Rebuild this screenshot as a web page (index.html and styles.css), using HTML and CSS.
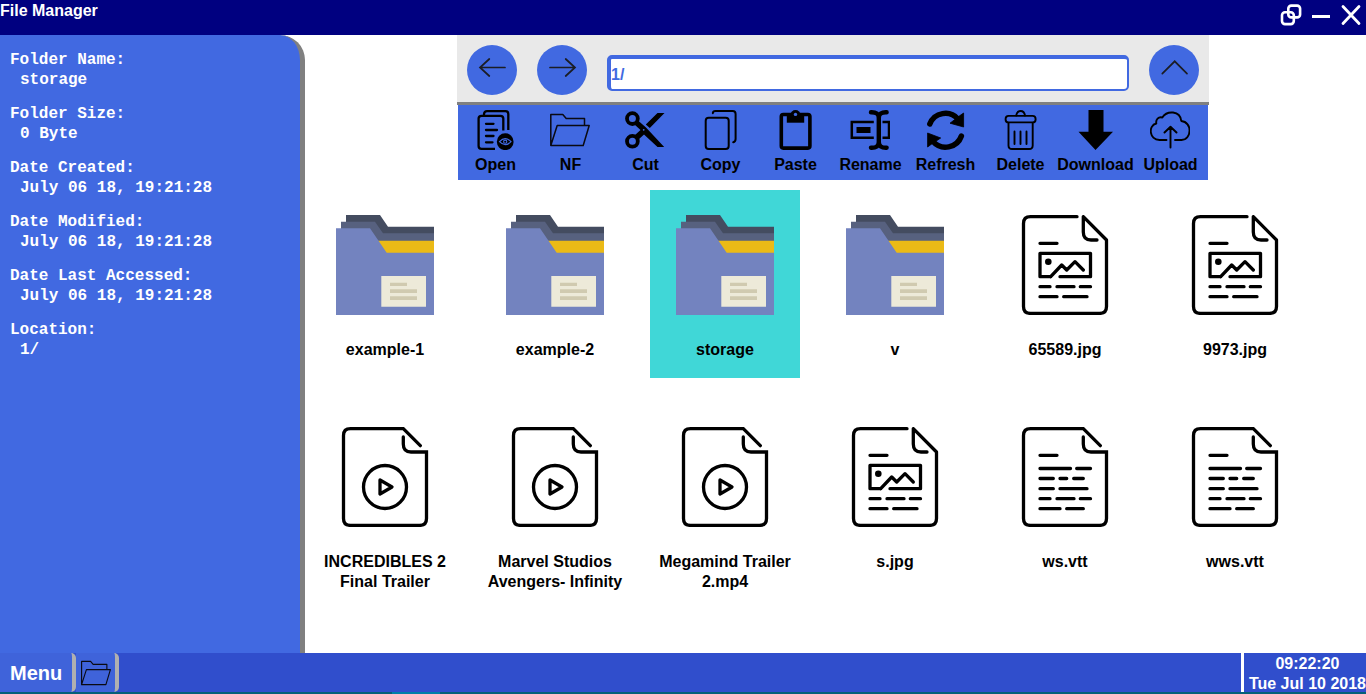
FILE: index.html
```html
<!DOCTYPE html>
<html lang="en">
<head>
<meta charset="utf-8">
<title>File Manager</title>
<link rel="stylesheet" href="styles.css">
</head>
<body class="desktop">
<svg class="sprite" aria-hidden="true">
  <symbol id="i-folder" viewBox="0 0 100 100">
    <path fill="#444c60" d="M11 0H45L53 11.7H99V30H11z"/>
    <path fill="#57617f" d="M6 6.7H40L48 18.3H99V30H6z"/>
    <path fill="#ebba16" d="M42 25.7H99V38H42z"/>
    <path fill="#7383bf" d="M1 13.3H35L51.7 37.7H99V100H1z"/>
    <path fill="#edead9" d="M46.3 61H91V91.7H46.3z"/>
    <path fill="#d0cab0" d="M55 67.7h17v3.3H55zM55 74.3h27v3.7H55zM55 81.3h27V85H55z"/>
  </symbol>
  <symbol id="i-image" viewBox="0 0 100 100">
    <g fill="none" stroke="#000" stroke-width="3.3" stroke-linecap="round" stroke-linejoin="round">
      <path d="M62 1.7H15.5Q8.5 1.7 8.5 8.5V91.5Q8.5 98.4 15.5 98.4H84.5Q91.5 98.4 91.5 91.5V25L68.3 1.7V17Q68.3 25 76 25H82"/>
      <path d="M25 28.3H42M35.7 61.7H25V38.3H75.5V61.7H45M35.7 61.7L46.7 50L51.7 55L60 46.7L68.3 55"/>
      <path d="M25 71.7H35M42 71.7H59M65.3 71.7H75.5M25 81.7H42M48.7 81.7H72"/>
    </g>
    <circle cx="33.3" cy="46.7" r="3.3"/>
  </symbol>
  <symbol id="i-page" viewBox="0 0 100 100">
    <path fill="none" stroke="#000" stroke-width="3.3" stroke-linecap="round" stroke-linejoin="miter" d="M85.3 18.7L68.3 1.7H15.5Q8.5 1.7 8.5 8.5V91.5Q8.5 98.4 15.5 98.4H84.5Q91.5 98.4 91.5 91.5V25H76Q68.3 25 68.3 17V10"/>
  </symbol>
  <symbol id="i-video" viewBox="0 0 100 100">
    <use href="#i-page"/>
    <g fill="none" stroke="#000" stroke-width="3.3" stroke-linejoin="round"><circle cx="50" cy="60" r="21.5"/><path d="M45 53L57 60L45 67z"/></g>
  </symbol>
  <symbol id="i-text" viewBox="0 0 100 100">
    <use href="#i-page"/>
    <path fill="none" stroke="#000" stroke-width="3.3" stroke-linecap="round" d="M25 28.3H42M25 41.5H55.5M61.7 41.5H75.5M25 51.5H38.3M45 51.5H51.7M58.7 51.5H68.3M25 61.7H38.3M45 61.7H72M25 71.7H35M42 71.7H59M65.3 71.7H75.5M25 81.7H45M51.7 81.7H68.3"/>
  </symbol>
  <symbol id="i-open-folder" viewBox="0 0 40 40">
    <path fill="none" stroke="#0a0a12" stroke-width="1.5" stroke-linejoin="round" d="M.8 35.5V4.500H12.800L16.200 8.500H34.500V15M.8 35.500L7.200 15.500H39.200L33.200 35.500z"/>
  </symbol>
</svg>

<header class="titlebar">
  <h1 class="titlebar-name">File Manager</h1>
  <div class="window-controls">
    <button class="window-button" aria-label="Restore"><svg viewBox="0 0 30 30" fill="none" stroke="#fff" stroke-width="2.6"><rect x="12.3" y="5.6" width="11.8" height="11.8" rx="3"/><rect x="6" y="12.3" width="11.8" height="11.8" rx="3"/></svg></button>
    <button class="window-button" aria-label="Minimize"><svg viewBox="0 0 30 30"><path fill="#fff" d="M6 15h18v3H6z"/></svg></button>
    <button class="window-button" aria-label="Close"><svg viewBox="0 0 30 30" stroke="#fff" stroke-width="2.8" stroke-linecap="round"><path d="M7 6.5L23 23.5M23 6.5L7 23.5"/></svg></button>
  </div>
</header>

<div class="workspace">
  <aside class="details">
    <dl class="detail-list">
      <div><dt>Folder Name:</dt><dd>storage</dd></div>
      <div><dt>Folder Size:</dt><dd>0 Byte</dd></div>
      <div><dt>Date Created:</dt><dd>July 06 18, 19:21:28</dd></div>
      <div><dt>Date Modified:</dt><dd>July 06 18, 19:21:28</dd></div>
      <div><dt>Date Last Accessed:</dt><dd>July 06 18, 19:21:28</dd></div>
      <div><dt>Location:</dt><dd>1/</dd></div>
    </dl>
  </aside>

  <main class="browser">
    <nav class="navbar">
      <button class="nav-button" aria-label="Back"><svg viewBox="0 0 50 50"><path d="M38 22.5H13M22.3 14L13 22.5L22.3 31"/></svg></button>
      <button class="nav-button" aria-label="Forward"><svg viewBox="0 0 50 50"><path d="M13 22.5H38M28.7 14L38 22.5L28.7 31"/></svg></button>
      <input class="path" type="text" value="1/" aria-label="Path">
      <button class="nav-button" aria-label="Up"><svg viewBox="0 0 50 50"><path d="M13.3 28.7L25.7 16.3L38 28.7"/></svg></button>
    </nav>

    <div class="tools" role="toolbar" aria-label="File actions">
      <button class="tool"><svg viewBox="0 0 40 40" fill="none" stroke="#000" stroke-width="2.3"><path d="M9 5V4Q9.3 1.2 12 1.2H30.5Q33.3 1.2 33.3 4V20M20 38.8H6.5Q3.6 38.8 3.6 36V8.5Q3.6 5.8 6.5 5.8H25.5Q28.300 5.8 28.300 8.5V20.5"/><path stroke-linecap="round" d="M11 13.8H18.5M11 20H22M11 26H18.5M11 32.3H17.5"/><circle cx="30.2" cy="31.7" r="8.4" fill="#000" stroke="none"/><path stroke="#4169e1" stroke-width="1.2" d="M24.5 31.7Q30.2 25.700 36 31.700Q30.2 37.700 24.500 31.700z"/><circle cx="30.2" cy="31.7" r="1.6" stroke="#4169e1" stroke-width="1.1"/></svg><span>Open</span></button>
      <button class="tool"><svg><use href="#i-open-folder"/></svg><span>NF</span></button>
      <button class="tool"><svg viewBox="0 0 40 40"><g fill="none" stroke="#000" stroke-width="3.8"><circle cx="7.4" cy="8.6" r="5.4"/><circle cx="7.4" cy="31.3" r="5.4"/></g><path d="M9.5 14.5L13 10.5L21 17.5L39.2 37H32.5L19 24.5L13 30L9.5 25.5L15.5 20zM20.8 14.5L32.5 3H39.5L24.8 18z"/><circle cx="18.7" cy="19.8" r=".9" fill="#4169e1"/></svg><span>Cut</span></button>
      <button class="tool"><svg viewBox="0 0 40 40" fill="none" stroke="#000" stroke-width="2" stroke-linecap="round"><rect x="5.7" y="7.8" width="23" height="31.2" rx="3"/><path d="M12.8 3.2Q13 1 15.5 1H32.7Q35.6 1 35.6 4V29Q35.6 31.7 33.2 32.3"/></svg><span>Copy</span></button>
      <button class="tool"><svg viewBox="0 0 40 40"><rect x="6.3" y="4.5" width="28.6" height="33.6" rx="2" fill="none" stroke="#000" stroke-width="3.6"/><path d="M11.8 3H29.2V12.7H11.8z"/><circle cx="20.5" cy="5" r="5"/><circle cx="20.5" cy="4.4" r="1.7" fill="#4169e1"/></svg><span>Paste</span></button>
      <button class="tool"><svg viewBox="0 0 40 40" fill="none" stroke="#000" stroke-width="2.5"><path d="M23.8 12H1.8V27.7H23.8M32.5 12H39V27.7H32.5"/><path fill="#000" stroke="none" d="M6.5 17H20.5V23H6.5z"/><path stroke-width="4.4" stroke-linecap="round" d="M21 2.3Q28.8 2 28.8 8V32Q28.8 38 21 37.7M36.6 2.3Q28.8 2 28.8 8V32Q28.8 38 36.6 37.7"/></svg><span>Rename</span></button>
      <button class="tool"><svg viewBox="0 0 40 40"><path fill="none" stroke="#000" stroke-width="5.5" stroke-linecap="round" d="M4.8 14A16.8 16.8 0 0 1 33 9M36.4 26A16.8 16.8 0 0 1 8 31.5"/><path d="M38.6 3V17L25 13.2L35 5.5zM2.6 23L15.7 28L6 34.5L2.6 37z" stroke="#000" stroke-linejoin="round" stroke-width=".8"/></svg><span>Refresh</span></button>
      <button class="tool"><svg viewBox="0 0 40 40" fill="none" stroke="#000" stroke-width="1.9" stroke-linecap="round"><rect x="5.6" y="5.9" width="30" height="6.5" rx="3"/><path d="M16.2 5.5Q17 1 20.6 1T25 5.5M8.5 13V35.5Q8.5 39 12 39H29.2Q32.7 39 32.7 35.5V13M14.5 21.5V34M20.5 21.5V34M26.5 21.5V34"/></svg><span>Delete</span></button>
      <button class="tool"><svg viewBox="0 0 40 40"><path d="M13.5 0H28.5V21.7H38L20.5 40L3.5 21.7H13.5z"/></svg><span>Download</span></button>
      <button class="tool"><svg viewBox="0 0 40 40" fill="none" stroke="#000" stroke-width="1.9" stroke-linecap="round" stroke-linejoin="round"><path d="M16.5 30H9.5C-1 29.5-2 15.5 6.3 13.5C5.5 9.5 8.5 6.5 12.3 7.5C17 .3 30 .3 31.3 11C42.5 12 42 29.5 31.5 30H25M20.5 37.5V17M14.5 22.5L20.5 16.7L26.5 22.5"/></svg><span>Upload</span></button>
    </div>

    <div class="files">
      <button class="file"><svg><use href="#i-folder"/></svg><span>example-1</span></button>
      <button class="file"><svg><use href="#i-folder"/></svg><span>example-2</span></button>
      <button class="file file-selected" aria-pressed="true"><svg><use href="#i-folder"/></svg><span>storage</span></button>
      <button class="file"><svg><use href="#i-folder"/></svg><span>v</span></button>
      <button class="file"><svg><use href="#i-image"/></svg><span>65589.jpg</span></button>
      <button class="file"><svg><use href="#i-image"/></svg><span>9973.jpg</span></button>
      <button class="file"><svg><use href="#i-video"/></svg><span>INCREDIBLES 2 Final Trailer</span></button>
      <button class="file"><svg><use href="#i-video"/></svg><span>Marvel Studios Avengers- Infinity</span></button>
      <button class="file"><svg><use href="#i-video"/></svg><span>Megamind Trailer 2.mp4</span></button>
      <button class="file"><svg><use href="#i-image"/></svg><span>s.jpg</span></button>
      <button class="file"><svg><use href="#i-text"/></svg><span>ws.vtt</span></button>
      <button class="file"><svg><use href="#i-text"/></svg><span>wws.vtt</span></button>
    </div>
  </main>
</div>

<footer class="taskbar">
  <button class="task task-menu">Menu</button>
  <button class="task task-app" aria-label="File Manager"><svg><use href="#i-open-folder"/></svg></button>
  <div class="clock"><time>09:22:20</time><span>Tue Jul 10 2018</span></div>
</footer>
<div class="wallpaper-edge"></div>
</body>
</html>
```
FILE: styles.css
```css
* {
  box-sizing: border-box;
}

.desktop {
  margin: 0;
  min-height: 100vh;
  display: flex;
  flex-direction: column;
  background: #fff;
  color: #000;
  font: bold 16px/20px "Liberation Sans", Arial, sans-serif;
}

button {
  padding: 0;
  border: 0;
  background: none;
  color: inherit;
  font: inherit;
  cursor: pointer;
}

svg {
  display: block;
}

.sprite {
  position: absolute;
  width: 0;
  height: 0;
}

/* Title bar */
.titlebar {
  display: flex;
  justify-content: space-between;
  align-items: flex-start;
  height: 35px;
  background: #000080;
  color: #fff;
}

.titlebar-name {
  margin: 0;
  padding-top: 1px;
  font-size: 16px;
}

.window-controls {
  display: flex;
}

.window-button,
.window-button svg {
  width: 30px;
  height: 30px;
}

/* Details panel */
.workspace {
  flex: 1;
  display: flex;
}

.details {
  flex: none;
  width: 305px;
  padding: 15px 10px;
  border-right: 5px solid #808080;
  border-top-right-radius: 25px;
  background: #4169e1;
  color: #fff;
  font-family: "Liberation Mono", "Courier New", monospace;
}

.detail-list {
  display: grid;
  gap: 14px;
  margin: 0;
}

.detail-list dd {
  margin: 0 0 0 10px;
}

/* Browser */
.browser {
  flex: 1;
  display: flex;
  flex-direction: column;
  align-items: center;
  padding-right: 5px;
}

.navbar {
  display: flex;
  align-items: center;
  gap: 20px;
  width: 100%;
  max-width: 752px;
  padding: 10px 10px 7px;
  border-bottom: 3px solid #808080;
  background: #e9e9e9;
}

.nav-button {
  flex: none;
  width: 50px;
  height: 50px;
  border-radius: 50%;
  background: #4169e1;
}

.nav-button svg {
  width: 50px;
  height: 50px;
  fill: none;
  stroke: #1b1d24;
  stroke-width: 1.7;
  stroke-linecap: round;
}

.path {
  flex: 1;
  min-width: 0;
  height: 36px;
  margin-top: 6px;
  padding: 2px 0 0;
  border: solid #4169e1;
  border-width: 4px 2px 2px 4px;
  border-radius: 5px;
  background: #fff;
  color: #4169e1;
  font: inherit;
}

.tools {
  display: flex;
  width: 100%;
  max-width: 750px;
  padding: 5px 0;
  background: #4169e1;
}

.tool {
  flex: 1 1 0;
  min-width: 0;
  display: flex;
  flex-direction: column;
  align-items: center;
  gap: 5px;
  white-space: nowrap;
}

.tool svg {
  width: 40px;
  height: 40px;
  margin-right: 1px;
}

/* File grid */
.files {
  align-self: stretch;
  display: grid;
  grid-template-columns: repeat(auto-fill, 150px);
  gap: 24px 20px;
  padding: 10px 0 0 5px;
}

.file {
  display: flex;
  flex-direction: column;
  align-items: center;
  gap: 25px;
  height: 188px;
  padding-top: 25px;
  overflow: hidden;
}

.file svg {
  flex: none;
  width: 100px;
  height: 100px;
}

.file-selected {
  background: #40d7d7;
}

/* Taskbar */
.taskbar {
  display: flex;
  height: 39px;
  background: #304ecc;
  color: #fff;
}

.task {
  border-right: 4px solid #b0b0b0;
  border-radius: 0 5px 5px 0;
  background: #3f63da;
}

.task-menu {
  padding: 0 10px;
  font-size: 20px;
}

.task-app {
  padding: 0 4px 0 5px;
}

.task-app svg {
  width: 30px;
  height: 30px;
}

.clock {
  display: flex;
  flex-direction: column;
  margin-left: auto;
  padding: 1px 0 0 5px;
  border-left: 3px solid #fff;
  text-align: center;
  white-space: nowrap;
}

.wallpaper-edge {
  height: 2px;
  background: linear-gradient(90deg, #046078 0 28.7%, #0080a8 28.7% 32.2%, #046078 32.2%);
}
```
